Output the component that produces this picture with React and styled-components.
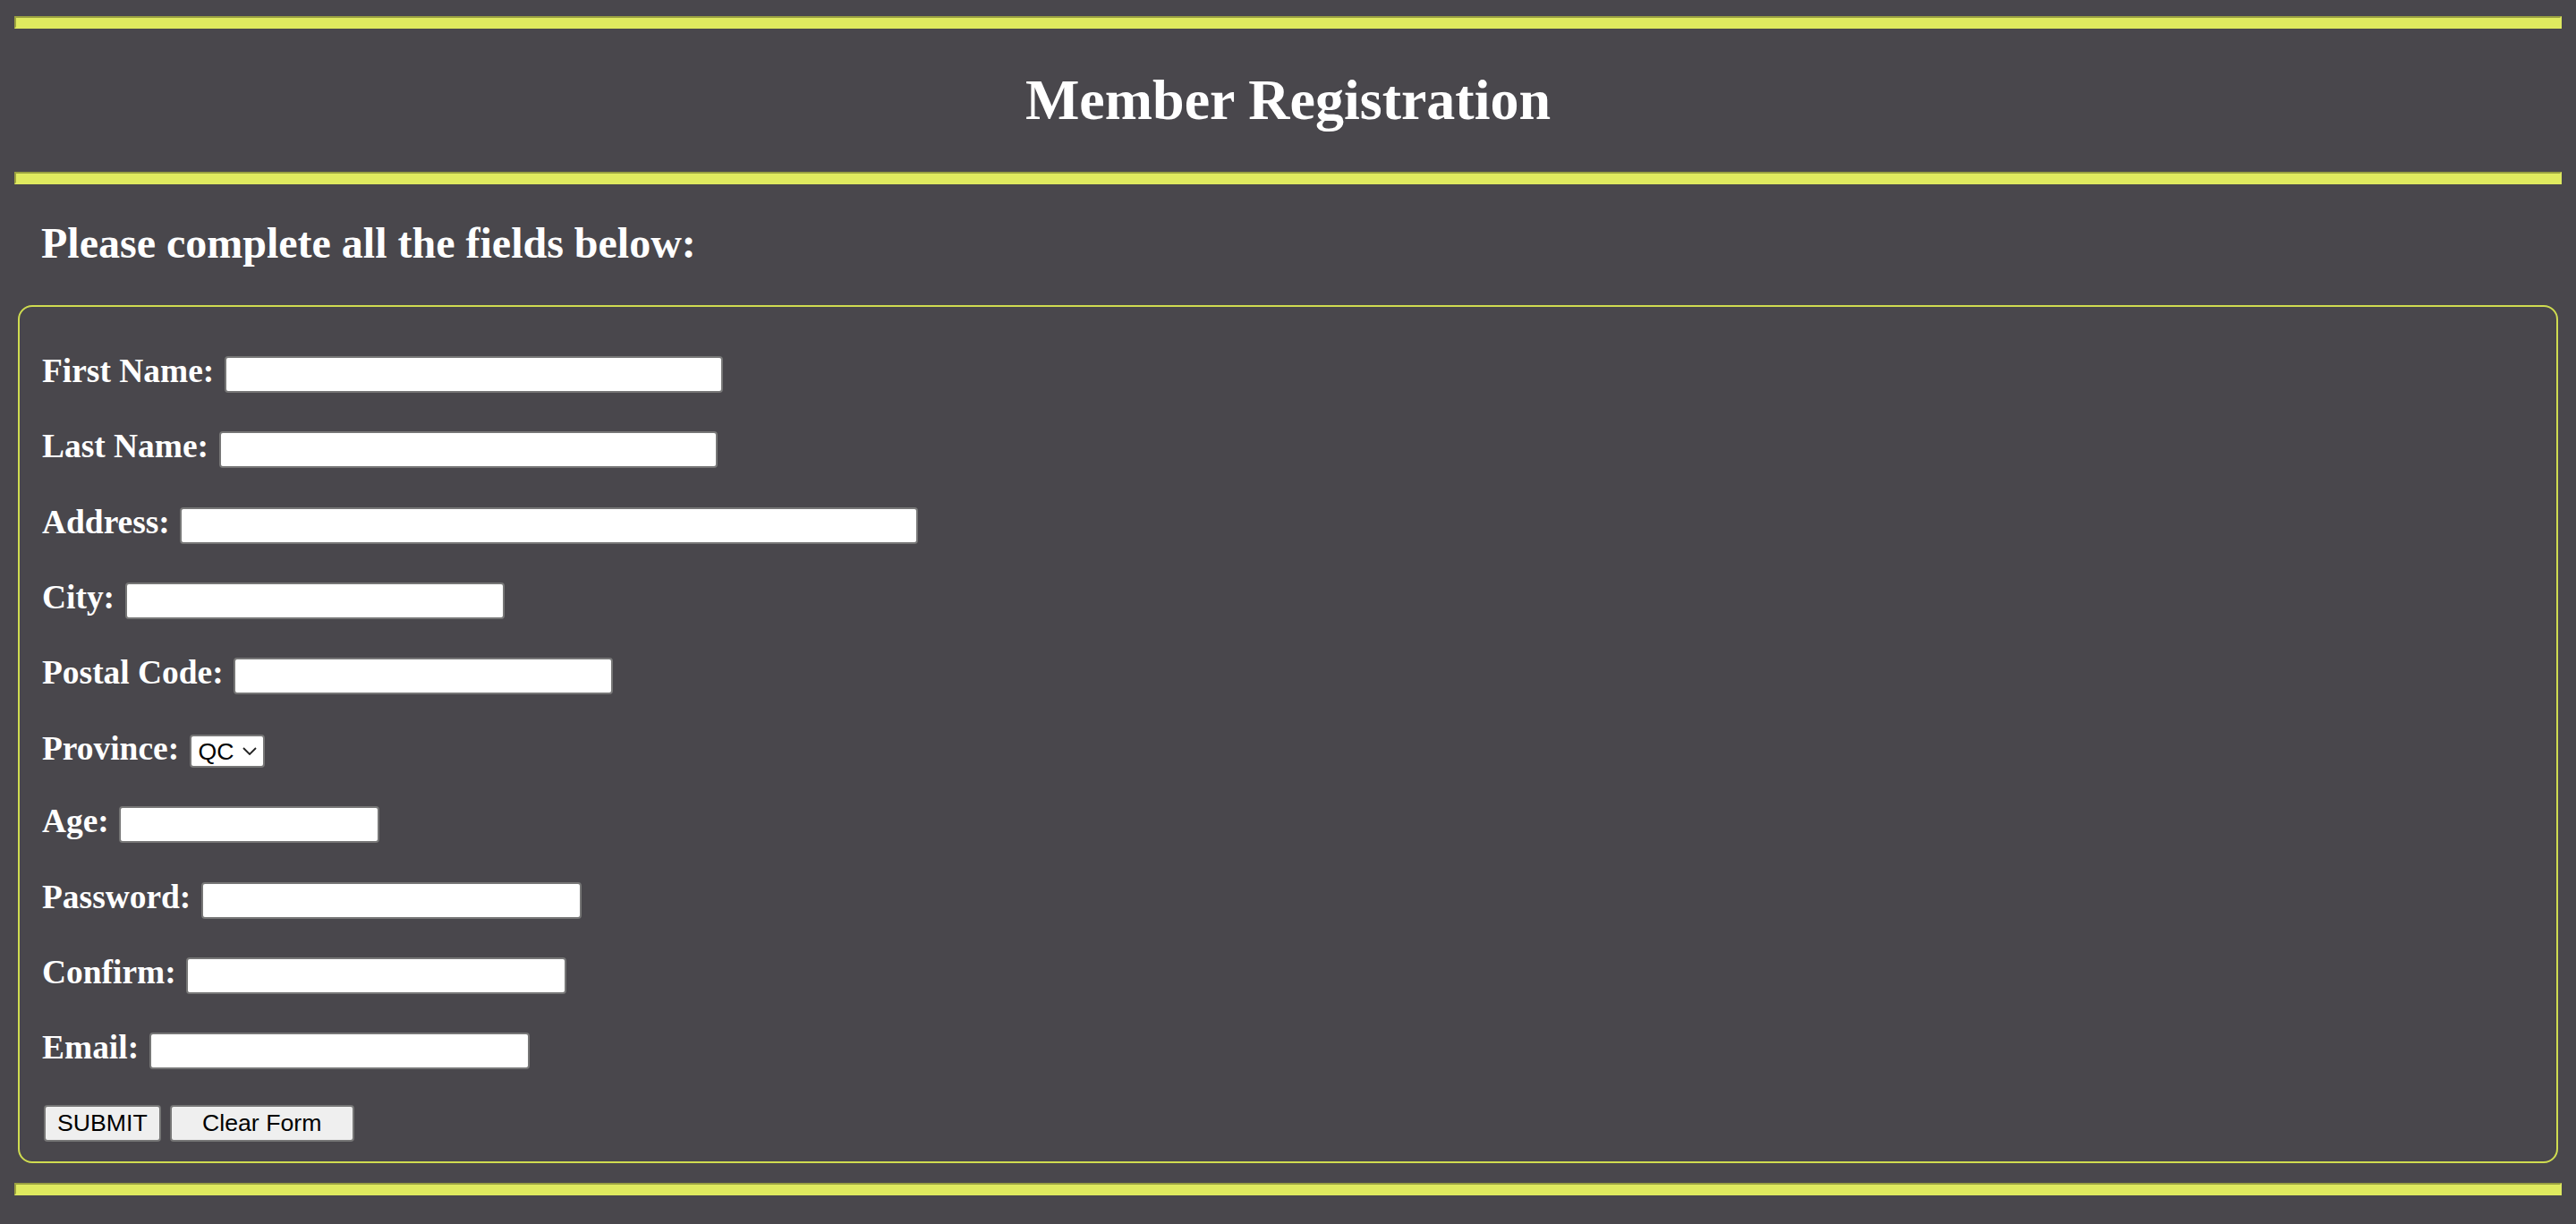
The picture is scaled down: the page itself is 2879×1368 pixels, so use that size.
import React from "react";
import styled, { createGlobalStyle } from "styled-components";

const GlobalStyle = createGlobalStyle`
  html, body {
    margin: 0;
    padding: 0;
    background: #49474c;
  }
  body {
    font-family: "Liberation Serif", "Times New Roman", serif;
    color: #ffffff;
  }
`;

const Page = styled.div`
  display: flex;
  flex-direction: column;
  padding: 18px 16px 33px;
`;

const Rule = styled.hr`
  margin: ${(p) => p.$top || 0}px 0 0;
  height: 14px;
  box-sizing: border-box;
  background: #dfea5f;
  border-style: solid;
  border-width: 2px;
  border-color: #9aa141 #dfea5f #dfea5f #9aa141;
`;

const Title = styled.h1`
  margin: 40px 0 40px;
  font-size: 64px;
  line-height: 80px;
  font-weight: 700;
  text-align: center;
`;

const Subtitle = styled.h2`
  margin: 38px 0 41px;
  padding-left: 30px;
  font-size: 48px;
  line-height: 56px;
  font-weight: 700;
`;

const Panel = styled.form`
  display: flex;
  flex-direction: column;
  gap: 39.3px;
  margin: 0 4px;
  padding: 51.2px 24px 22px;
  border: 2px solid #cfdc50;
  border-radius: 16px;
`;

const Row = styled.div`
  display: flex;
  align-items: baseline;
  gap: 11.5px;
`;

const Label = styled.label`
  padding-left: 1px;
  font-size: 37.44px;
  line-height: 41px;
  font-weight: 700;
  white-space: nowrap;
`;

const TextInput = styled.input`
  width: ${(p) => p.$width}px;
  height: 41px;
  box-sizing: border-box;
  margin: 0;
  padding: 0 4px;
  border: 2px solid #767676;
  border-radius: 4px;
  background: #ffffff;
  font-family: "Liberation Sans", Arial, sans-serif;
  font-size: 26.67px;
  color: #000000;
  outline: none;
`;

const SelectWrap = styled.span`
  position: relative;
  display: inline-flex;
`;

const Select = styled.select`
  appearance: none;
  -webkit-appearance: none;
  width: 84px;
  height: 37px;
  box-sizing: border-box;
  margin: 0;
  padding: 0 30px 0 8px;
  border: 2px solid #767676;
  border-radius: 4px;
  background: #ffffff;
  font-family: "Liberation Sans", Arial, sans-serif;
  font-size: 26.67px;
  color: #000000;
  outline: none;
`;

const Chevron = styled.svg`
  position: absolute;
  right: 9px;
  top: 50%;
  width: 16px;
  height: 9px;
  margin-top: -4.5px;
  pointer-events: none;
`;

const Buttons = styled.div`
  display: flex;
  gap: 10px;
  padding-left: 3px;
`;

const Button = styled.button`
  width: ${(p) => (p.$width ? `${p.$width}px` : "auto")};
  height: 41px;
  box-sizing: border-box;
  margin: 0;
  padding: 0 13px;
  border: 2px solid #767676;
  border-radius: 4px;
  background: #efefef;
  font-family: "Liberation Sans", Arial, sans-serif;
  font-size: 26.67px;
  color: #000000;
  cursor: pointer;
`;

const fields = [
  { id: "fname", label: "First Name:", width: 557 },
  { id: "lname", label: "Last Name:", width: 557 },
  { id: "address", label: "Address:", width: 825 },
  { id: "city", label: "City:", width: 424 },
  { id: "postal", label: "Postal Code:", width: 424 },
  { id: "province", label: "Province:", select: true },
  { id: "age", label: "Age:", width: 291 },
  { id: "password", label: "Password:", width: 425, type: "password" },
  { id: "confirm", label: "Confirm:", width: 425, type: "password" },
  { id: "email", label: "Email:", width: 425, type: "text" },
];

const provinces = ["QC", "ON", "BC", "AB", "MB", "SK", "NS", "NB", "NL", "PE"];

export default function App() {
  return (
    <>
      <GlobalStyle />
      <Page>
        <Rule />
        <Title>Member Registration</Title>
        <Rule />
        <Subtitle>Please complete all the fields below:</Subtitle>
        <Panel onSubmit={(e) => e.preventDefault()}>
          {fields.map((f) => (
            <Row key={f.id}>
              <Label htmlFor={f.id}>{f.label}</Label>
              {f.select ? (
                <SelectWrap>
                  <Select id={f.id} defaultValue="QC">
                    {provinces.map((p) => (
                      <option key={p} value={p}>
                        {p}
                      </option>
                    ))}
                  </Select>
                  <Chevron viewBox="0 0 16 9">
                    <path d="M1 1 L8 8 L15 1" fill="none" stroke="#222" strokeWidth="1.8" />
                  </Chevron>
                </SelectWrap>
              ) : (
                <TextInput id={f.id} type={f.type || "text"} $width={f.width} />
              )}
            </Row>
          ))}
          <Buttons>
            <Button type="submit">SUBMIT</Button>
            <Button type="reset" $width={206}>Clear Form</Button>
          </Buttons>
        </Panel>
        <Rule $top={22} />
      </Page>
    </>
  );
}
